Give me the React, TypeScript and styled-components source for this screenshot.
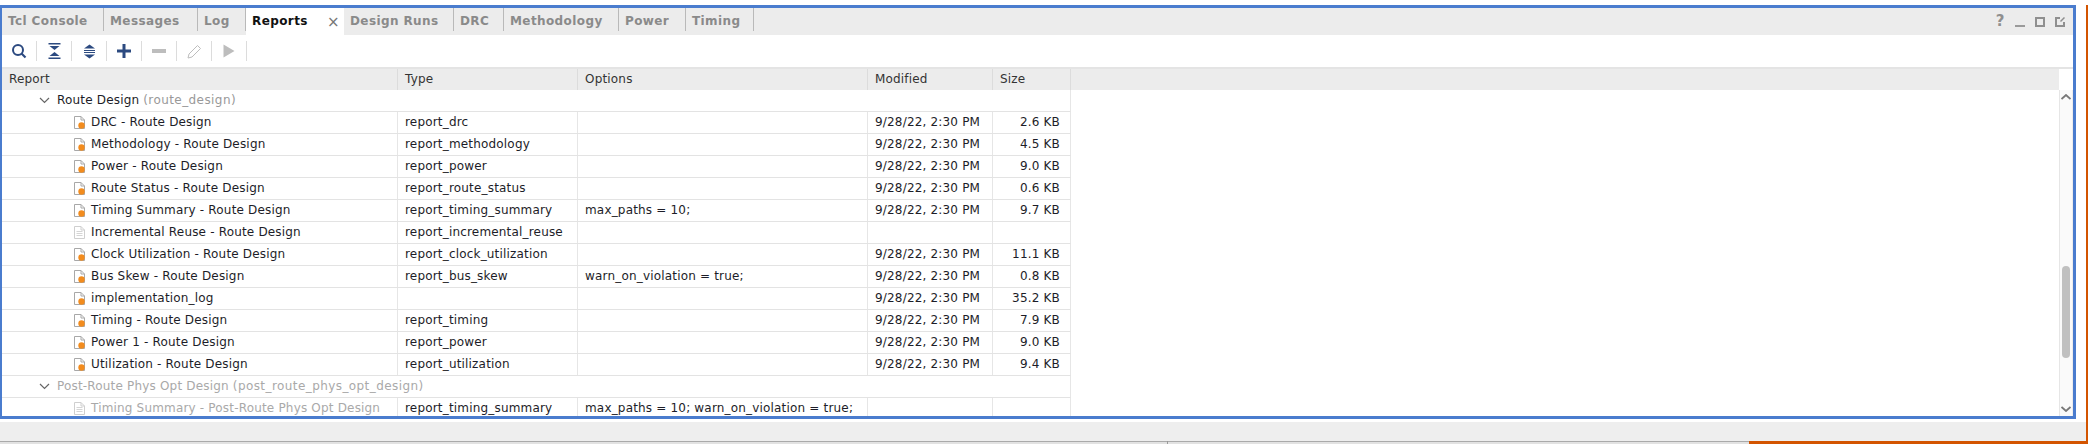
import styled, { createGlobalStyle } from 'styled-components'

const GlobalStyle = createGlobalStyle`
  html, body {
    margin: 0;
    padding: 0;
    background: #fff;
  }
  body {
    width: 2088px;
    height: 444px;
    overflow: hidden;
    font-family: 'DejaVu Sans', sans-serif;
  }
`

const Page = styled.div`
  width: 2088px;
  height: 444px;
  display: flex;
  flex-direction: column;
  background: #fff;
  overflow: hidden;
`

const Upper = styled.div`
  flex: 1;
  min-height: 0;
  display: flex;
  padding-top: 5px;
`

const WindowColumn = styled.div`
  flex: 1;
  min-width: 0;
  display: flex;
  flex-direction: column;
`

const OrangeEdge = styled.div`
  width: 2px;
  background: #d35400;
`

const FrameRow = styled.div`
  display: flex;
`

const Frame = styled.div`
  width: 2076px;
  height: 414px;
  box-sizing: border-box;
  border: solid #4a7cce;
  border-width: 3px 3px 3px 2px;
  display: flex;
  flex-direction: column;
  background: #fff;
`

const SideGap = styled.div`
  flex: 1;
  background: #fff;
`

const TabBar = styled.div`
  height: 27px;
  flex: none;
  display: flex;
  background: #ececec;
`

const Tab = styled.div<{ $width: number; $active?: boolean }>`
  width: ${({ $width }) => $width}px;
  flex: none;
  box-sizing: border-box;
  display: flex;
  align-items: center;
  justify-content: space-between;
  padding: 2px 6px ${({ $active }) => ($active ? 4 : 0)}px 6px;
  margin-bottom: ${({ $active }) => ($active ? 0 : 4)}px;
  background: ${({ $active }) => ($active ? '#fff' : 'transparent')};
  border-right: ${({ $active }) => ($active ? 'none' : '1px solid #b9b9b9')};
  color: ${({ $active }) => ($active ? '#111' : '#8a8a8a')};
  font-size: 12px;
  font-weight: bold;
  letter-spacing: 0.4px;
  white-space: nowrap;
`

const TabClose = styled.span`
  font-size: 15px;
  font-weight: normal;
  color: #777;
  margin-right: -2px;
  padding-top: 3px;
`

const WindowButtons = styled.div`
  margin-left: auto;
  display: flex;
  align-items: center;
  gap: 10px;
  padding: 0 8px 0 0;
`

const Toolbar = styled.div`
  height: 32px;
  flex: none;
  display: flex;
  align-items: center;
  background: #fff;
`

const ToolButton = styled.div`
  width: 35px;
  height: 20px;
  flex: none;
  box-sizing: border-box;
  display: flex;
  align-items: center;
  justify-content: center;
  border-right: 1px solid #dcdcdc;
`

const Body = styled.div`
  flex: 1;
  min-height: 0;
  display: flex;
  flex-direction: column;
  border-top: 2px solid #e4e4e4;
`

const Header = styled.div`
  height: 21px;
  flex: none;
  display: flex;
  background: #ececec;
`

const HeaderCell = styled.div<{ $width: number }>`
  width: ${({ $width }) => $width}px;
  flex: none;
  box-sizing: border-box;
  padding: 0 0 0 7px;
  line-height: 21px;
  font-size: 12px;
  letter-spacing: 0.18px;
  color: #333;
  border-right: 1px solid #dcdcdc;
`

const HeaderFill = styled.div`
  flex: 1;
`

const HeaderCorner = styled.div`
  width: 14px;
  background: #fff;
`

const Content = styled.div`
  flex: 1;
  min-height: 0;
  display: flex;
`

const TableViewport = styled.div`
  flex: 1;
  min-width: 0;
  overflow: hidden;
`

const Table = styled.div`
  width: 1069px;
`

const Row = styled.div`
  display: grid;
  grid-template-columns: 396px 180px 290px 125px 78px;
  height: 22px;
  box-sizing: border-box;
  border-bottom: 1px solid #e3e3e3;
`

const GroupRow = styled.div<{ $muted?: boolean }>`
  height: 22px;
  box-sizing: border-box;
  display: flex;
  align-items: center;
  padding-left: 37px;
  gap: 7px;
  font-size: 12px;
  letter-spacing: 0.18px;
  color: ${({ $muted }) => ($muted ? '#a9a9a9' : '#1d1d28')};
  border-bottom: 1px solid #e3e3e3;
  border-right: 1px solid #e6e6e6;
  white-space: nowrap;
`

const GroupLabel = styled.span`
  padding-bottom: 1px;
`

const GroupKey = styled.span<{ $muted?: boolean }>`
  letter-spacing: 0.42px;
  color: ${({ $muted }) => ($muted ? '#a9a9a9' : '#999')};
`

const Cell = styled.div<{ $align?: string; $muted?: boolean }>`
  box-sizing: border-box;
  display: flex;
  align-items: center;
  justify-content: ${({ $align }) => ($align === 'right' ? 'flex-end' : 'flex-start')};
  padding: 0 ${({ $align }) => ($align === 'right' ? 10 : 6)}px 1px 7px;
  font-size: 12px;
  letter-spacing: 0.18px;
  color: ${({ $muted }) => ($muted ? '#a9a9a9' : '#1d1d28')};
  border-right: 1px solid #e6e6e6;
  white-space: nowrap;
  overflow: hidden;
`

const NameCell = styled(Cell)`
  padding-left: 72px;
  gap: 6px;
`

const FileGlyph = styled.svg`
  flex: none;
  margin-top: 1px;
`

const Scrollbar = styled.div`
  width: 14px;
  flex: none;
  display: flex;
  flex-direction: column;
  align-items: center;
  box-sizing: border-box;
  background: #fafafa;
  border-left: 1px solid #e6e6e6;
  border-right: 1px solid #ececec;
`

const ScrollArrow = styled.div`
  height: 14px;
  flex: none;
  display: flex;
  align-items: center;
  justify-content: center;
`

const ScrollTrack = styled.div`
  flex: 1;
  min-height: 0;
  display: flex;
  flex-direction: column;
  padding-top: 162px;
`

const ScrollThumb = styled.div`
  width: 8px;
  height: 92px;
  border-radius: 4px;
  background: #c0c0c0;
`

const WhiteRow = styled.div`
  height: 3px;
  background: #fff;
`

const BottomBar = styled.div`
  height: 19px;
  flex: none;
  background: #eeeeee;
`

const Footer = styled.div`
  height: 3px;
  flex: none;
  display: flex;
`

const FooterGrey = styled.div<{ $width: number }>`
  width: ${({ $width }) => $width}px;
  flex: none;
  box-sizing: border-box;
  border-top: 1px solid #aaaaaa;
  background: #e2e2e2;
`

const FooterTick = styled.div`
  width: 1px;
  flex: none;
  background: #9a9a9a;
`

const FooterOrange = styled.div`
  flex: 1;
  background: #d35400;
`

const HelpGlyph = styled.span`
  width: 10px;
  text-align: center;
  font-size: 15px;
  font-weight: bold;
  color: #8f8f8f;
  line-height: 1;
`

const NAVY = '#2c4a80'
const DISABLED = '#bdbdbd'

const FileIcon = ({ muted }: { muted?: boolean }) => (
  <FileGlyph width="11" height="13" viewBox="0 0 11 13">
    <path d="M0.5 0.5H7L10.5 4V12.5H0.5Z" fill="#fff" stroke={muted ? '#cfcfcf' : '#a8a8a8'} />
    <path d="M7 0.5V4H10.5" fill="none" stroke={muted ? '#cfcfcf' : '#a8a8a8'} />
    {muted ? (
      <path d="M2.5 5.5H8.5M2.5 7.5H8.5M2.5 9.5H8.5" stroke="#d5d5d5" />
    ) : (
      <circle cx="7.5" cy="9.5" r="3.2" fill="#f28c1e" />
    )}
  </FileGlyph>
)

const Chevron = () => (
  <svg width="11" height="7" viewBox="0 0 11 7">
    <path d="M1 1L5.5 5.5L10 1" fill="none" stroke="#666" strokeWidth="1.2" />
  </svg>
)

const SearchIcon = () => (
  <svg width="16" height="16" viewBox="0 0 16 16">
    <circle cx="7" cy="7" r="5" fill="none" stroke={NAVY} strokeWidth="2" />
    <path d="M10.5 10.5L14.5 14.5" stroke={NAVY} strokeWidth="2.2" />
  </svg>
)

const CollapseIcon = () => (
  <svg width="13" height="16" viewBox="0 0 13 16">
    <path d="M0.5 0H12.5V1.5H0.5Z M1.5 3H11.5L6.5 7Z M6.5 9L11.5 13H1.5Z M0.5 14.5H12.5V16H0.5Z" fill={NAVY} />
  </svg>
)

const ExpandIcon = () => (
  <svg width="13" height="15" viewBox="0 0 13 15">
    <path d="M6.5 0.5L12 4.5H1Z M1 6H12V7H1Z M1 8H12V9H1Z M1 10.5H12L6.5 14.5Z" fill={NAVY} />
  </svg>
)

const PlusIcon = () => (
  <svg width="14" height="14" viewBox="0 0 14 14">
    <path d="M5.5 0H8.5V5.5H14V8.5H8.5V14H5.5V8.5H0V5.5H5.5Z" fill={NAVY} />
  </svg>
)

const MinusIcon = () => (
  <svg width="14" height="4" viewBox="0 0 14 4">
    <rect width="14" height="4" fill={DISABLED} />
  </svg>
)

const PencilIcon = () => (
  <svg width="15" height="15" viewBox="0 0 15 15">
    <path d="M1 14L2 10L10.5 1.5L13.5 4.5L5 13Z" fill="none" stroke={DISABLED} strokeWidth="1" />
  </svg>
)

const PlayIcon = () => (
  <svg width="12" height="14" viewBox="0 0 12 14">
    <path d="M0.5 0.5L11.5 7L0.5 13.5Z" fill={DISABLED} />
  </svg>
)

const MinimizeIcon = () => (
  <svg width="10" height="10" viewBox="0 0 10 10">
    <rect y="8" width="10" height="2" fill="#9a9a9a" />
  </svg>
)

const MaximizeIcon = () => (
  <svg width="10" height="10" viewBox="0 0 10 10">
    <rect x="1" y="1" width="8" height="8" fill="none" stroke="#8f8f8f" strokeWidth="2" />
  </svg>
)

const FloatIcon = () => (
  <svg width="10" height="10" viewBox="0 0 10 10">
    <path d="M5 1H1V9H9V5" fill="none" stroke="#8f8f8f" strokeWidth="2" />
    <path d="M5.5 4.5L9.5 0.5" stroke="#8f8f8f" strokeWidth="1.5" />
  </svg>
)

const ArrowUp = () => (
  <svg width="10" height="6" viewBox="0 0 10 6">
    <path d="M0.5 5L5 1L9.5 5" fill="none" stroke="#777" strokeWidth="1.8" />
  </svg>
)

const ArrowDown = () => (
  <svg width="10" height="6" viewBox="0 0 10 6">
    <path d="M0.5 1L5 5L9.5 1" fill="none" stroke="#777" strokeWidth="1.8" />
  </svg>
)

const tabs = [
  { label: 'Tcl Console', width: 102 },
  { label: 'Messages', width: 94 },
  { label: 'Log', width: 48 },
  { label: 'Reports', width: 98, active: true },
  { label: 'Design Runs', width: 110 },
  { label: 'DRC', width: 50 },
  { label: 'Methodology', width: 115 },
  { label: 'Power', width: 67 },
  { label: 'Timing', width: 68 },
]

const columns = [
  { label: 'Report', width: 396 },
  { label: 'Type', width: 180 },
  { label: 'Options', width: 290 },
  { label: 'Modified', width: 125 },
  { label: 'Size', width: 78 },
]

const DATE = '9/28/22, 2:30 PM'

const reports = [
  { name: 'DRC - Route Design', type: 'report_drc', options: '', size: '2.6 KB' },
  { name: 'Methodology - Route Design', type: 'report_methodology', options: '', size: '4.5 KB' },
  { name: 'Power - Route Design', type: 'report_power', options: '', size: '9.0 KB' },
  { name: 'Route Status - Route Design', type: 'report_route_status', options: '', size: '0.6 KB' },
  { name: 'Timing Summary - Route Design', type: 'report_timing_summary', options: 'max_paths = 10;', size: '9.7 KB' },
  { name: 'Incremental Reuse - Route Design', type: 'report_incremental_reuse', options: '', size: '', empty: true },
  { name: 'Clock Utilization - Route Design', type: 'report_clock_utilization', options: '', size: '11.1 KB' },
  { name: 'Bus Skew - Route Design', type: 'report_bus_skew', options: 'warn_on_violation = true;', size: '0.8 KB' },
  { name: 'implementation_log', type: '', options: '', size: '35.2 KB' },
  { name: 'Timing - Route Design', type: 'report_timing', options: '', size: '7.9 KB' },
  { name: 'Power 1 - Route Design', type: 'report_power', options: '', size: '9.0 KB' },
  { name: 'Utilization - Route Design', type: 'report_utilization', options: '', size: '9.4 KB' },
]

export default function App() {
  return (
    <Page>
      <GlobalStyle />
      <Upper>
        <WindowColumn>
          <FrameRow>
            <Frame>
              <TabBar>
                {tabs.map((tab) => (
                  <Tab key={tab.label} $width={tab.width} $active={tab.active}>
                    {tab.label}
                    {tab.active && <TabClose>×</TabClose>}
                  </Tab>
                ))}
                <WindowButtons>
                  <HelpGlyph>?</HelpGlyph>
                  <MinimizeIcon />
                  <MaximizeIcon />
                  <FloatIcon />
                </WindowButtons>
              </TabBar>
              <Toolbar>
                <ToolButton>
                  <SearchIcon />
                </ToolButton>
                <ToolButton>
                  <CollapseIcon />
                </ToolButton>
                <ToolButton>
                  <ExpandIcon />
                </ToolButton>
                <ToolButton>
                  <PlusIcon />
                </ToolButton>
                <ToolButton>
                  <MinusIcon />
                </ToolButton>
                <ToolButton>
                  <PencilIcon />
                </ToolButton>
                <ToolButton>
                  <PlayIcon />
                </ToolButton>
              </Toolbar>
              <Body>
                <Header>
                  {columns.map((col) => (
                    <HeaderCell key={col.label} $width={col.width}>
                      {col.label}
                    </HeaderCell>
                  ))}
                  <HeaderFill />
                  <HeaderCorner />
                </Header>
                <Content>
                  <TableViewport>
                    <Table>
                      <GroupRow>
                        <Chevron />
                        <GroupLabel>
                          Route Design <GroupKey>(route_design)</GroupKey>
                        </GroupLabel>
                      </GroupRow>
                      {reports.map((r) => (
                        <Row key={r.name}>
                          <NameCell>
                            <FileIcon muted={r.empty} />
                            {r.name}
                          </NameCell>
                          <Cell>{r.type}</Cell>
                          <Cell>{r.options}</Cell>
                          <Cell>{r.empty ? '' : DATE}</Cell>
                          <Cell $align="right">{r.size}</Cell>
                        </Row>
                      ))}
                      <GroupRow $muted>
                        <Chevron />
                        <GroupLabel>
                          Post-Route Phys Opt Design <GroupKey $muted>(post_route_phys_opt_design)</GroupKey>
                        </GroupLabel>
                      </GroupRow>
                      <Row>
                        <NameCell $muted>
                          <FileIcon muted />
                          Timing Summary - Post-Route Phys Opt Design
                        </NameCell>
                        <Cell>report_timing_summary</Cell>
                        <Cell>max_paths = 10; warn_on_violation = true;</Cell>
                        <Cell />
                        <Cell />
                      </Row>
                    </Table>
                  </TableViewport>
                  <Scrollbar>
                    <ScrollArrow>
                      <ArrowUp />
                    </ScrollArrow>
                    <ScrollTrack>
                      <ScrollThumb />
                    </ScrollTrack>
                    <ScrollArrow>
                      <ArrowDown />
                    </ScrollArrow>
                  </Scrollbar>
                </Content>
              </Body>
            </Frame>
            <SideGap />
          </FrameRow>
          <WhiteRow />
          <BottomBar />
        </WindowColumn>
        <OrangeEdge />
      </Upper>
      <Footer>
        <FooterGrey $width={1167} />
        <FooterTick />
        <FooterGrey $width={581} />
        <FooterOrange />
      </Footer>
    </Page>
  )
}
